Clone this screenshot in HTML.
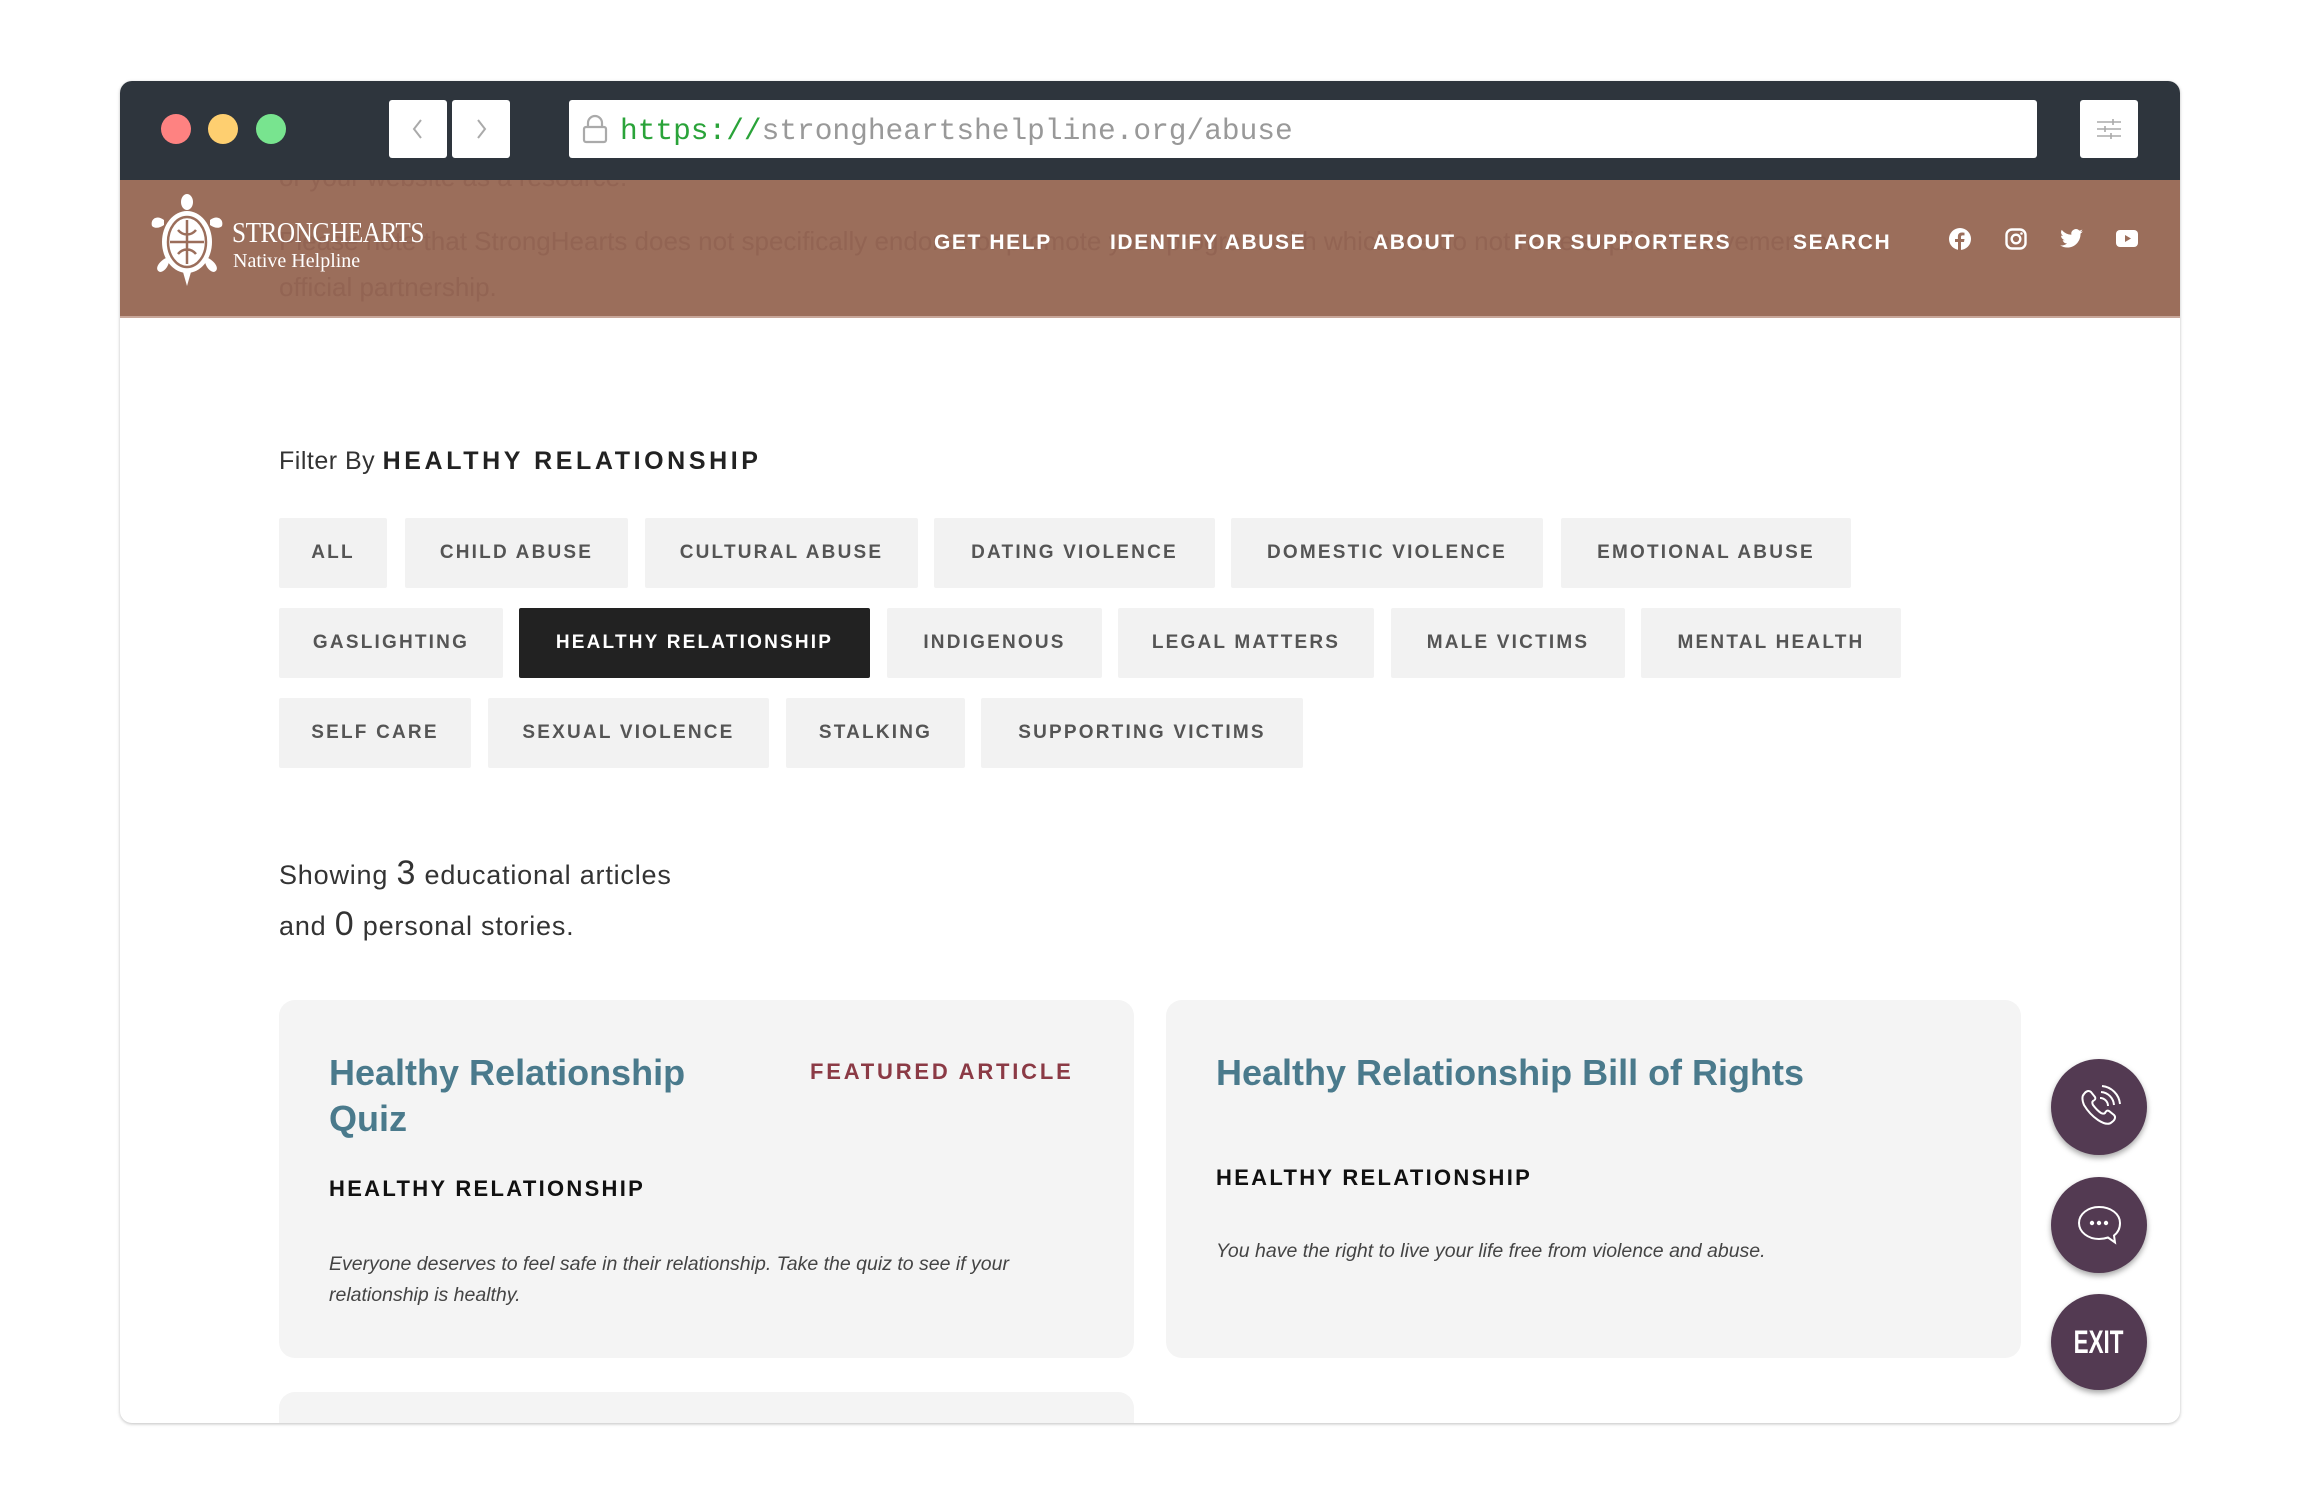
<!DOCTYPE html>
<html><head><meta charset="utf-8"><style>
*{margin:0;padding:0;box-sizing:border-box}
body{width:2300px;height:1504px;background:#fff;position:relative;overflow:hidden;font-family:"Liberation Sans",sans-serif}
.win{position:absolute;left:120px;top:81px;width:2060px;height:1342px;border-radius:12px;background:#fff;box-shadow:0 1px 3px rgba(0,0,0,.25);overflow:hidden}
.bar{position:absolute;left:0;top:0;width:2060px;height:99px;background:#2e353d}
.dot{position:absolute;top:33px;width:30px;height:30px;border-radius:50%}
.nb{position:absolute;top:19px;width:58px;height:58px;background:#fff;border-radius:3px;display:flex;align-items:center;justify-content:center}
.url{position:absolute;left:449px;top:19px;width:1468px;height:58px;background:#fff;border-radius:3px;font-family:"Liberation Mono",monospace;font-size:29.5px;color:#999;line-height:62px;padding-left:51px}
.hdr{position:absolute;left:0;top:99px;width:2060px;height:138px;background:#9b6e5b;border-bottom:2px solid #c8a79a;overflow:hidden}
.ghost{position:absolute;left:159px;font-size:26px;color:#926453;white-space:nowrap}
.nav{position:absolute;top:48px;font-size:21px;font-weight:bold;color:#fff;letter-spacing:1.6px;white-space:nowrap}
.t{position:absolute;height:70px;background:#f2f2f2;color:#555;font-size:19px;font-weight:bold;letter-spacing:2.2px;display:flex;align-items:center;justify-content:center;border-radius:2px}
.t.on{background:#222;color:#fff}
.card{position:absolute;background:#f4f4f4;border-radius:16px}
.ct{position:absolute;font-size:36px;font-weight:bold;color:#4a7a8c;line-height:46px}
.sub{position:absolute;font-size:22px;font-weight:bold;letter-spacing:2.3px;color:#111}
.desc{position:absolute;font-size:19.5px;font-style:italic;color:#444;line-height:31px}
.fb{position:absolute;left:1931px;width:96px;height:96px;border-radius:50%;background:#533a52;box-shadow:0 3px 6px rgba(0,0,0,.35);display:flex;align-items:center;justify-content:center}
</style></head><body>
<div class="win">
 <div class="bar">
  <div class="dot" style="left:41px;background:#fe8281"></div>
  <div class="dot" style="left:88px;background:#fecf70"></div>
  <div class="dot" style="left:136px;background:#78e48f"></div>
  <div class="nb" style="left:269px"><svg width="20" height="26" viewBox="0 0 20 26"><path d="M13 4L6 13l7 9" stroke="#aaa" stroke-width="2" fill="none"/></svg></div>
  <div class="nb" style="left:332px"><svg width="20" height="26" viewBox="0 0 20 26"><path d="M7 4l7 9-7 9" stroke="#aaa" stroke-width="2" fill="none"/></svg></div>
  <div class="url"><svg style="position:absolute;left:13px;top:14px" width="26" height="30" viewBox="0 0 26 30"><path d="M6 13V9a7 7 0 0 1 14 0v4" stroke="#aaa" stroke-width="2.2" fill="none"/><rect x="2" y="13" width="22" height="15" rx="2" stroke="#aaa" stroke-width="2.2" fill="none"/></svg><span style="color:#2aa339">https://</span>strongheartshelpline.org/abuse</div>
  <div class="nb" style="left:1960px"><svg width="28" height="24" viewBox="0 0 28 24"><g stroke="#aaa" stroke-width="1.6"><path d="M2 5h24M2 12h24M2 19h24"/><path d="M18 2v6M10 9v6M16 16v6"/></g></svg></div>
 </div>
 <div class="hdr">
  <div class="ghost" style="top:-18px">or your website as a resource.</div>
  <div class="ghost" style="top:46px">Please note that StrongHearts does not specifically endorse or promote your program with which we do not have explicit involvement or an</div>
  <div class="ghost" style="top:92px">official partnership.</div>
  <svg style="position:absolute;left:30px;top:14px" width="74" height="92" viewBox="0 0 74 92">
   <g fill="#fff"><ellipse cx="37" cy="8" rx="6" ry="8"/><path d="M14 26c-8-6-14 0-12 6 3 3 8 2 12-1z"/><path d="M60 26c8-6 14 0 12 6-3 3-8 2-12-1z"/><path d="M16 64c-8 4-12 12-6 14 4 0 8-5 9-10z"/><path d="M58 64c8 4 12 12 6 14-4 0-8-5-9-10z"/><path d="M33 78l4 14 4-14z"/>
   <ellipse cx="37" cy="48" rx="25" ry="31"/></g>
   <ellipse cx="37" cy="48" rx="19" ry="25" fill="none" stroke="#9b6e5b" stroke-width="2.5"/>
   <path d="M37 26v44M20 48h34M28 36c5 6 13 6 18 0M28 60c5-6 13-6 18 0" stroke="#9b6e5b" stroke-width="2.5" fill="none"/>
  </svg>
  <div style="position:absolute;left:112px;top:38px;color:#fff;font-family:'Liberation Serif',serif;font-size:28px;letter-spacing:-0.5px;transform:scaleX(.9);transform-origin:left">STRONGHEARTS</div>
  <div style="position:absolute;left:113px;top:70px;color:#fff;font-family:'Liberation Serif',serif;font-size:20px">Native Helpline</div>
  <div class="nav" style="left:814px;top:51px">GET HELP</div>
  <div class="nav" style="left:990px;top:51px">IDENTIFY ABUSE</div>
  <div class="nav" style="left:1253px;top:51px">ABOUT</div>
  <div class="nav" style="left:1394px;top:51px">FOR SUPPORTERS</div>
  <div class="nav" style="left:1673px;top:51px">SEARCH</div>
  <svg style="position:absolute;left:1829px;top:48px" width="22" height="22" viewBox="0 0 22 22"><circle cx="11" cy="11" r="11" fill="#fff"/><path d="M12 22v-8h3l.5-3H12V9c0-1 .4-1.6 1.6-1.6h1.9V4.7c-.4 0-1.4-.2-2.6-.2-2.6 0-4 1.5-4 4.1V11H6v3h3v8z" fill="#9b6e5b"/></svg>
  <svg style="position:absolute;left:1885px;top:48px" width="22" height="22" viewBox="0 0 22 22"><rect x="1.5" y="1.5" width="19" height="19" rx="5.5" fill="none" stroke="#fff" stroke-width="2.4"/><circle cx="11" cy="11" r="4.3" fill="none" stroke="#fff" stroke-width="2.4"/><circle cx="16.5" cy="5.5" r="1.3" fill="#fff"/></svg>
  <svg style="position:absolute;left:1940px;top:49px" width="23" height="19" viewBox="0 0 24 20"><path d="M24 2.4c-.9.4-1.8.6-2.8.8 1-.6 1.8-1.6 2.2-2.7-1 .6-2 1-3.1 1.2A4.9 4.9 0 0 0 11.9 6 14 14 0 0 1 1.7.9a4.9 4.9 0 0 0 1.5 6.6c-.8 0-1.600-.3-2.2-.6 0 2.4 1.7 4.4 3.9 4.8-.7.2-1.5.2-2.2.1.6 2 2.4 3.4 4.6 3.4A9.9 9.9 0 0 1 0 17.3 14 14 0 0 0 7.5 19.5c9 0 14-7.5 14-14v-.6c1-.7 1.8-1.6 2.5-2.5z" fill="#fff"/></svg>
  <svg style="position:absolute;left:1996px;top:50px" width="22" height="17" viewBox="0 0 22 17"><rect width="22" height="17" rx="4" fill="#fff"/><path d="M9 5l6 3.5-6 3.5z" fill="#9b6e5b"/></svg>
 </div>
 <div style="position:absolute;left:159px;top:366px;font-size:25px;color:#333;letter-spacing:.5px">Filter By <b style="letter-spacing:3.6px;color:#222">HEALTHY RELATIONSHIP</b></div>
 <div class="t" style="left:159px;top:437px;width:108px">ALL</div>
 <div class="t" style="left:285px;top:437px;width:223px">CHILD ABUSE</div>
 <div class="t" style="left:525px;top:437px;width:273px">CULTURAL ABUSE</div>
 <div class="t" style="left:814px;top:437px;width:281px">DATING VIOLENCE</div>
 <div class="t" style="left:1111px;top:437px;width:312px">DOMESTIC VIOLENCE</div>
 <div class="t" style="left:1441px;top:437px;width:290px">EMOTIONAL ABUSE</div>
 <div class="t" style="left:159px;top:527px;width:224px">GASLIGHTING</div>
 <div class="t on" style="left:399px;top:527px;width:351px">HEALTHY RELATIONSHIP</div>
 <div class="t" style="left:767px;top:527px;width:215px">INDIGENOUS</div>
 <div class="t" style="left:998px;top:527px;width:256px">LEGAL MATTERS</div>
 <div class="t" style="left:1271px;top:527px;width:234px">MALE VICTIMS</div>
 <div class="t" style="left:1521px;top:527px;width:260px">MENTAL HEALTH</div>
 <div class="t" style="left:159px;top:617px;width:192px">SELF CARE</div>
 <div class="t" style="left:368px;top:617px;width:281px">SEXUAL VIOLENCE</div>
 <div class="t" style="left:666px;top:617px;width:179px">STALKING</div>
 <div class="t" style="left:861px;top:617px;width:322px">SUPPORTING VICTIMS</div>
 <div style="position:absolute;left:159px;top:768px;font-size:27px;color:#333;line-height:49px;letter-spacing:.8px">Showing <span style="font-size:34px">3</span> educational articles<br>and <span style="font-size:34px">0</span> personal stories.</div>
 <div class="card" style="left:159px;top:919px;width:855px;height:358px">
  <div class="ct" style="left:50px;top:50px">Healthy Relationship<br>Quiz</div>
  <div style="position:absolute;left:531px;top:59px;font-size:22px;font-weight:bold;letter-spacing:2.8px;color:#8b3a45">FEATURED ARTICLE</div>
  <div class="sub" style="left:50px;top:176px">HEALTHY RELATIONSHIP</div>
  <div class="desc" style="left:50px;top:249px">Everyone deserves to feel safe in their relationship. Take the quiz to see if your<br>relationship is healthy.</div>
 </div>
 <div class="card" style="left:1046px;top:919px;width:855px;height:358px">
  <div class="ct" style="left:50px;top:50px">Healthy Relationship Bill of Rights</div>
  <div class="sub" style="left:50px;top:165px">HEALTHY RELATIONSHIP</div>
  <div class="desc" style="left:50px;top:236px">You have the right to live your life free from violence and abuse.</div>
 </div>
 <div class="card" style="left:159px;top:1311px;width:855px;height:80px"></div>
 <div class="fb" style="top:978px"><svg width="46" height="46" viewBox="0 0 46 46" fill="none" stroke="#fff" stroke-width="2"><path d="M8 10c2-3 5-4 7-2l4 5c1 2 0 3-2 4-1 1-1 2 0 4 3 4 5 6 8 8 2 1 3 1 4 0 1-2 2-3 4-2l5 4c2 2 1 5-2 7-3 3-8 2-14-2-6-4-11-10-14-15-2-5-2-9 0-11z"/><path d="M24 14a8 8 0 0 1 8 8M25 8a14 14 0 0 1 13 13M26 2a20 20 0 0 1 18 18"/></svg></div>
 <div class="fb" style="top:1096px"><svg width="46" height="42" viewBox="0 0 46 42" fill="none" stroke="#fff" stroke-width="2"><path d="M23 3C12 3 3 10 3 19s9 16 20 16c3 0 6-.5 9-1.5l7 5-1-7c4-3 6-7 6-12.5C44 10 35 3 23 3z"/><circle cx="16" cy="19" r="1.2" fill="#fff"/><circle cx="23" cy="19" r="1.2" fill="#fff"/><circle cx="30" cy="19" r="1.2" fill="#fff"/></svg></div>
 <div class="fb" style="top:1213px"><span style="color:#fff;font-weight:bold;font-size:32px;transform:scaleX(.7);display:inline-block;letter-spacing:0">EXIT</span></div>
</div>
</body></html>
